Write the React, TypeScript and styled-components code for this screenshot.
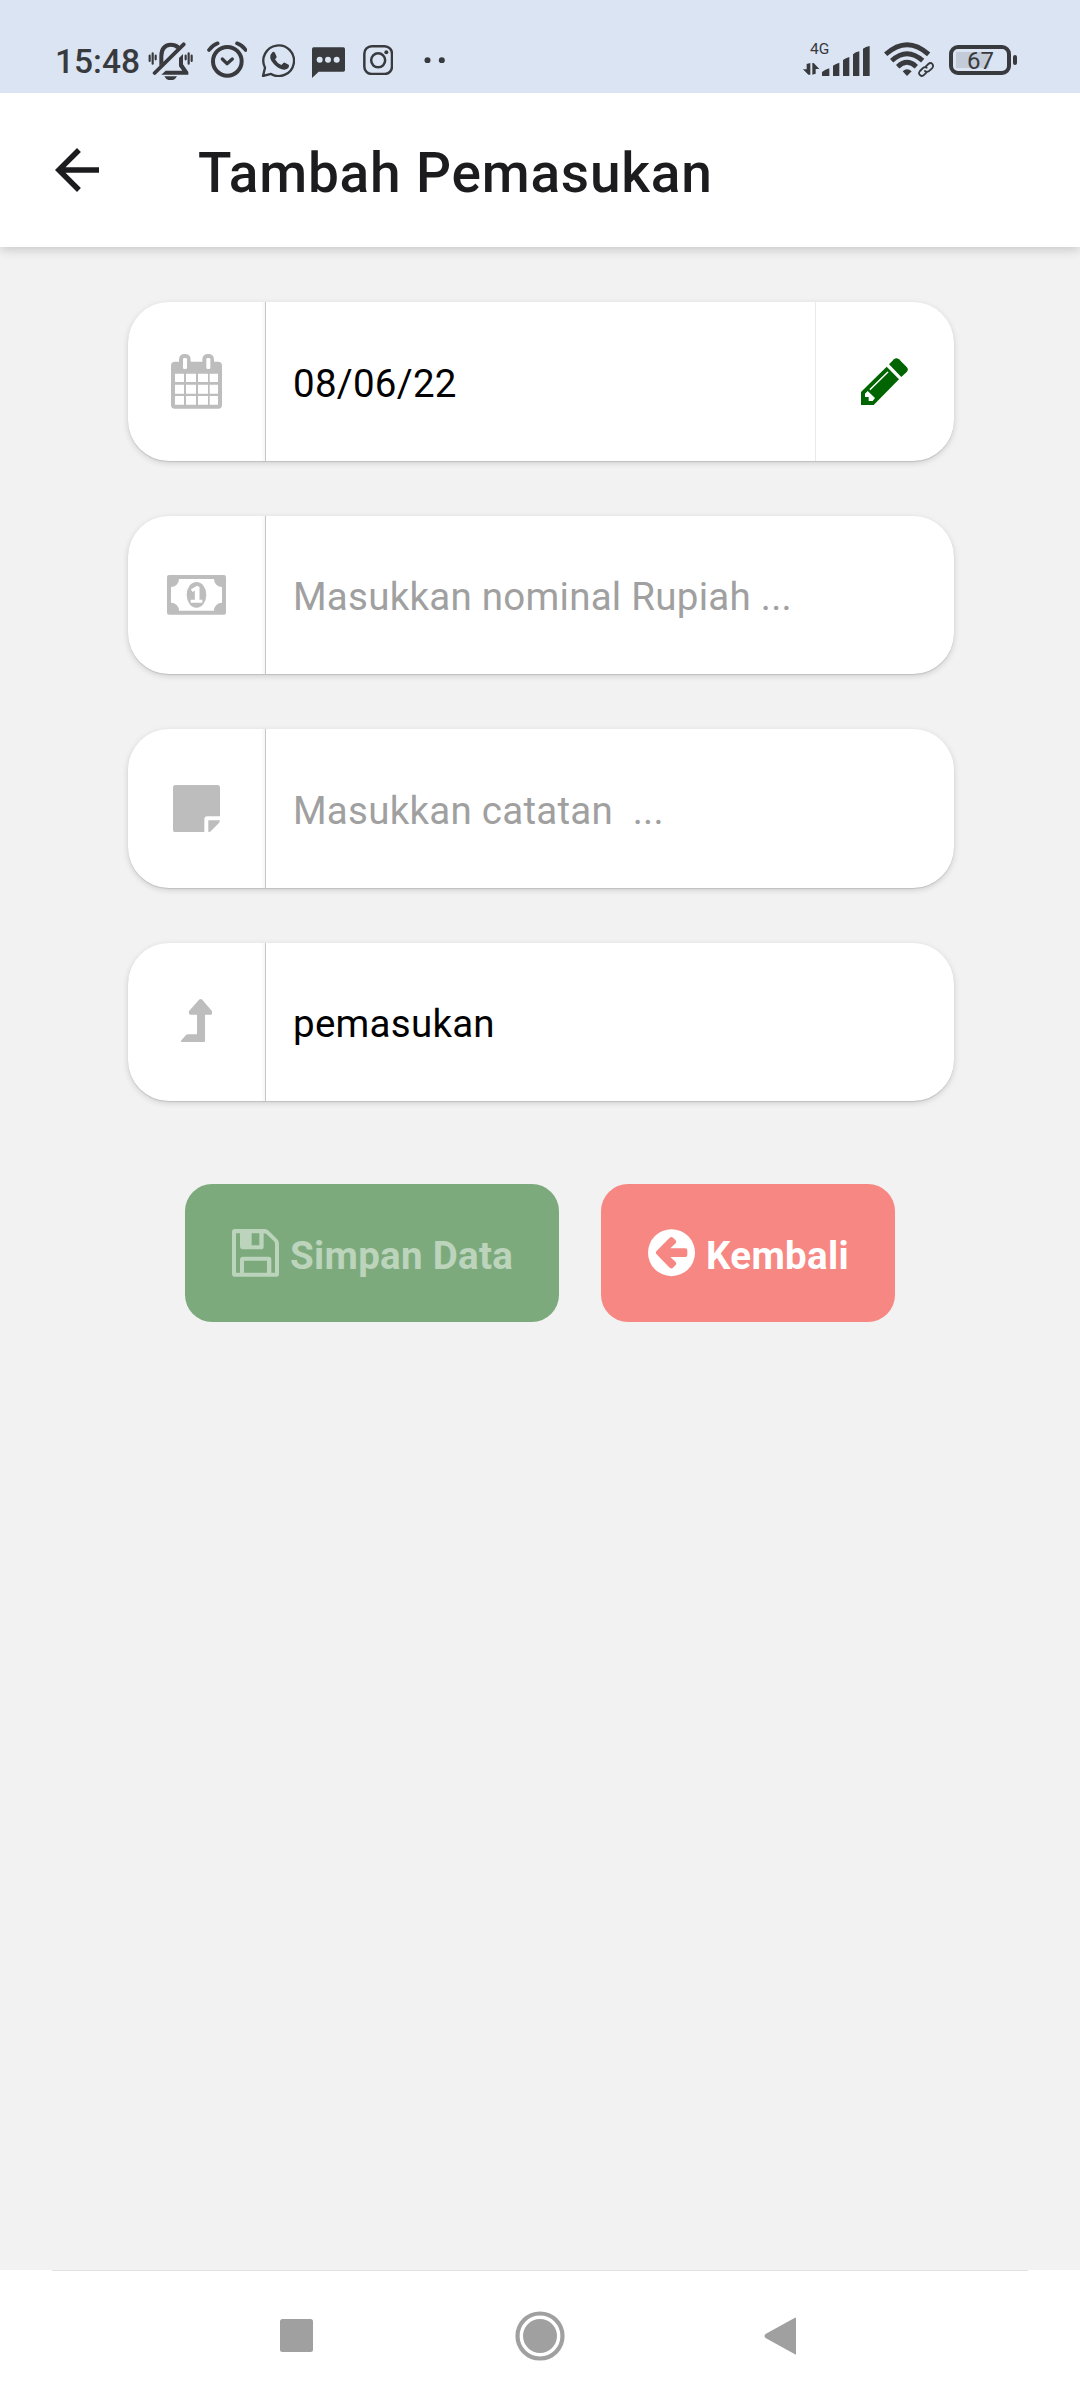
import React from "react";
import styled, { createGlobalStyle } from "styled-components";

const GlobalStyle = createGlobalStyle`
  body { margin: 0; background: #f2f2f2; }
  svg { display: block; flex: none; }
`;

const Screen = styled.div`
  width: 1080px;
  height: 2400px;
  display: flex;
  flex-direction: column;
  background: #f2f2f2;
  font-family: Roboto, "Noto Sans", sans-serif;
  overflow: hidden;
`;

const StatusBar = styled.div`
  height: 93px;
  flex: none;
  z-index: 2;
  box-sizing: border-box;
  padding: 27px 63px 0 55px;
  display: flex;
  justify-content: space-between;
  align-items: flex-start;
  background: #dbe4f3;
  color: #383a3e;
`;

const StatusGroup = styled.div`
  display: flex;
  align-items: center;
  height: 66px;
`;

const Clock = styled.span`
  font-size: 33.5px;
  font-weight: 500;
  line-height: 40px;
  width: 92.500px;
  padding-top: 4px;
  white-space: nowrap;
`;

const Slot = styled.span<{ $left?: number; $top?: number }>`
  display: flex;
  margin-left: ${(p) => p.$left ?? 0}px;
  padding-top: ${(p) => p.$top ?? 0}px;
`;

const Network = styled.div`
  display: flex;
  flex-direction: column;
  width: 17px;
  margin-right: 2px;
  margin-top: -5px;
  align-items: flex-start;
`;

const NetworkLabel = styled.span`
  font-size: 15.5px;
  line-height: 18px;
  margin: 0 0 5px 7px;
  white-space: nowrap;
`;

const BatteryShell = styled.div`
  box-sizing: border-box;
  width: 62px;
  height: 30px;
  border: 4px solid #383a3e;
  border-radius: 9px;
  padding: 5px 2px 3px 3px;
  display: flex;
  justify-content: center;
  align-items: center;
  background: linear-gradient(90deg, #c3cad8 0 33px, transparent 33px) 3px 3px / 48px 16px no-repeat;
  font-size: 24px;
  font-weight: 400;
  line-height: 22px;
`;

const BatteryTip = styled.div`
  width: 4px;
  height: 10px;
  border-radius: 2px;
  margin-left: 2px;
  background: #383a3e;
`;

const Header = styled.header`
  height: 154px;
  flex: none;
  display: flex;
  align-items: center;
  background: #fff;
  padding-left: 44px;
  box-sizing: border-box;
  box-shadow: 0 2px 11px rgba(0, 0, 0, 0.2);
  z-index: 1;
`;

const Title = styled.h1`
  margin: 6px 0 0 88px;
  font-size: 55px;
  font-weight: 500;
  line-height: 66px;
  color: #1c1c1e;
  letter-spacing: 0.8px;
  white-space: nowrap;
`;

const Content = styled.main`
  flex: 1;
  display: flex;
  flex-direction: column;
  align-items: center;
  padding-top: 55px;
`;

const Form = styled.div`
  display: grid;
  grid-template-columns: 826px;
  grid-template-rows: 159px 158px 159px 158px;
  row-gap: 55px;
  margin-left: 2px;
`;

const Field = styled.div`
  display: flex;
  align-items: stretch;
  background: #fff;
  border-radius: 41px;
  box-shadow: 0 2px 6px rgba(0, 0, 0, 0.15), 0 1px 1px rgba(0, 0, 0, 0.12);
`;

const FieldIcon = styled.div<{ $raise?: number }>`
  width: 138px;
  box-sizing: border-box;
  display: flex;
  align-items: center;
  justify-content: center;
  padding-bottom: ${(p) => p.$raise ?? 0}px;
  border-right: 1px solid #c6c6c6;
  border-radius: 41px 0 0 41px;
  background: linear-gradient(90deg, rgba(255, 255, 255, 0) 133px, #f6f6f6 137px);
`;

const FieldText = styled.div<{ $muted?: boolean }>`
  flex: 1;
  display: flex;
  align-items: center;
  padding: 4px 0 0 27px;
  font-size: 38.5px;
  line-height: 46px;
  letter-spacing: 0.26px;
  white-space: pre;
  color: ${(p) => (p.$muted ? "#a0a0a0" : "#000")};
`;

const EditButton = styled.div`
  width: 139px;
  box-sizing: border-box;
  display: flex;
  align-items: center;
  justify-content: center;
  padding-right: 2px;
  border-left: 1px solid #e9e9e9;
`;

const Actions = styled.div`
  display: flex;
  gap: 42px;
  margin-top: 83px;
`;

const Button = styled.div<{ $bg: string; $fg: string; $width: number }>`
  width: ${(p) => p.$width}px;
  height: 138px;
  box-sizing: border-box;
  padding-left: 47px;
  display: flex;
  align-items: center;
  gap: 11px;
  border-radius: 27px;
  background: ${(p) => p.$bg};
  color: ${(p) => p.$fg};
`;

const ButtonLabel = styled.span`
  font-size: 38.5px;
  font-weight: 700;
  line-height: 46px;
  letter-spacing: 0.3px;
  padding-top: 5px;
  white-space: nowrap;
`;

const NavBar = styled.nav`
  height: 130px;
  flex: none;
  box-sizing: border-box;
  background: #fff;
  display: flex;
  flex-direction: column;
`;

const NavLine = styled.div`
  height: 1px;
  margin: 0 52px;
  background: #e2e2e2;
`;

const NavIcons = styled.div`
  display: flex;
  align-items: center;
  height: 129px;
  padding-left: 279.500px;
`;

type IconProps = { box: [number, number, number, number]; color?: string; children: React.ReactNode };

/* Icons are drawn on a grid of three units per pixel. */
const Icon = ({ box, color = "#383a3e", children }: IconProps) => (
  <svg viewBox={box.join(" ")} width={box[2] / 3} height={box[3] / 3} fill={color} stroke="none">
    {children}
  </svg>
);

const rect = (x1: number, y1: number, x2: number, y2: number) => `M${x1} ${y1}H${x2}V${y2}H${x1}Z`;

const cols = [[195, 222], [228, 258], [264, 294], [299, 324]];
const rows = [[281, 306], [314, 341], [348, 374]];

const CalendarIcon = () => (
  <Icon box={[183, 222, 153, 164]} color="#bdbdbd">
    <path d="M195 245H207V239Q207 222 224.500 222Q242 222 242 239V245H277V239Q277 222 294.500 222Q312 222 312 239V245H324Q336 245 336 257V375Q336 386 325 386H194Q183 386 183 375V257Q183 245 195 245Z" />
    <g fill="#fff">
      <rect x="219" y="234" width="12" height="33" rx="4" />
      <rect x="289" y="234" width="12" height="33" rx="4" />
      <path d={rows.flatMap(([t, b]) => cols.map(([l, r]) => rect(l, t, r, b))).join("")} />
    </g>
  </Icon>
);

const MoneyIcon = () => (
  <Icon box={[171, 226, 177, 119]} color="#bdbdbd">
    <path
      fillRule="evenodd"
      d="M177 226H342Q348 226 348 232V339Q348 345 342 345H177Q171 345 171 339V232Q171 226 177 226ZM207 238A24 24 0 0 1 183 262V309A24 24 0 0 1 207 333H312A24 24 0 0 1 336 309V262A24 24 0 0 1 312 238Z"
    />
    <ellipse cx="259.500" cy="285.500" rx="29.500" ry="38.500" />
    <path d="M245 273L259 265V302M242 304.500H277" fill="none" stroke="#fff" strokeWidth="9" />
    <path d="M263 261V302" stroke="#fff" strokeWidth="11" />
  </Icon>
);

const NoteIcon = () => (
  <Icon box={[189, 224, 141, 142]} color="#bdbdbd">
    <path d="M197 224H322Q330 224 330 232V318H292Q283 318 283 327V366H197Q189 366 189 358V232Q189 224 197 224Z" />
    <path d="M295 330H330Q329 336 324 341L306 359Q301 365 295 366Z" />
  </Icon>
);

const LevelUpIcon = () => (
  <Icon box={[213, 236, 94, 130]} color="#bdbdbd">
    <path d="M267 238Q272 234 277 238L305 271Q309 277 304 283H285V362Q285 366 281 366H216Q211 364 214 360L228 344Q230 342 233 342H261V283H240Q234 278 238 271Z" />
  </Icon>
);

const PencilIcon = () => (
  <Icon box={[243, 234, 141, 141]} color="#006400">
    <path d="M243 336L320 260L357 298L281 375H243Z" />
    <path d="M327 253L342 238Q349 231 357 238L380 261Q387 268 380 276L364 291Z" />
    <path d="M271 328L323 277" stroke="#fff" strokeWidth="4.500" strokeLinecap="round" />
    <path d="M263 333L285 354L278 363H266V351H255V341Z" fill="#fff" />
  </Icon>
);

const SaveIcon = () => (
  <Icon box={[186, 208, 141, 143]} color="#bbd4bb">
    <path
      fillRule="evenodd"
      d="M194 208H284Q290 208 296 213L321 238Q327 244 327 251V343Q327 351 319 351H194Q186 351 186 343V216Q186 208 194 208ZM198 221V339H210V300Q210 291 219 291H295Q304 291 304 300V339H315V253Q315 248 312 245L290 224Q286 221 281 221V261Q281 269 272 269H219Q210 269 210 260V221ZM222 303V339H291V303ZM245 221V257H268V221Z"
    />
  </Icon>
);

const BackCircleIcon = () => (
  <Icon box={[204, 209, 141, 142]} color="#fff">
    <circle cx="274.500" cy="280" r="70.500" />
    <path
      fill="#f78783"
      d="M229 276L269 235Q274 231 279 235L287 243Q291 248 287 252L271 267H316Q322 267 322 273V287Q322 293 316 293H271L287 308Q291 313 287 317L279 325Q274 330 269 325L229 284Q226 280 229 276Z"
    />
  </Icon>
);

const MutedBellIcon = () => (
  <Icon box={[322, 64, 136, 116]}>
    <g fill="none" stroke="#383a3e" strokeWidth="6.500" strokeLinecap="round">
      <path d="M327 105V121M336 98V129M345 105V116M453 105V121M444 98V129M435 105V116" />
    </g>
    <path d="M356 136V106Q356 68 390 66Q407 66 417 76L408 85Q401 78 390 78Q368 80 368 107V125Z" />
    <path d="M415 112L427 100V131L443 154V162H362L375 150H425L415 137Z" />
    <path d="M371 167H409Q403 179 390 179Q377 179 371 167Z" />
    <path d="M342 157L429 71" stroke="#383a3e" strokeWidth="11.500" strokeLinecap="round" />
  </Icon>
);

const AlarmIcon = () => (
  <Icon box={[499, 63, 121, 112]}>
    <g fill="none" stroke="#383a3e">
      <circle cx="560" cy="124" r="43" strokeWidth="12" />
      <path d="M505 90Q515 76 531 70M615 90Q605 76 589 70" strokeWidth="11" strokeLinecap="round" />
      <path d="M545 117L559 131L575 117" strokeWidth="10" strokeLinecap="round" strokeLinejoin="round" />
    </g>
  </Icon>
);

const WhatsappIcon = () => (
  <Icon box={[663, 68, 102, 104]}>
    <path
      fill="none"
      stroke="#383a3e"
      strokeWidth="7"
      strokeLinejoin="round"
      d="M669 167L675 142A46 46 0 1 1 693 161Z"
    />
    <path d="M697 96Q702 92 705 98L710 109Q710 112 705 117Q711 129 724 134L731 127Q733 126 736 128L747 134Q748 146 734 148Q719 149 702 132Q682 111 697 96Z" />
  </Icon>
);

const MessageIcon = () => (
  <Icon box={[815, 81, 99, 93]}>
    <path d="M820 82H909Q914 82 914 87V150Q914 155 909 155H835L815 174V87Q815 82 820 82Z" />
    <g fill="#dbe4f3">
      <circle cx="838" cy="119" r="9" />
      <circle cx="863" cy="119" r="9" />
      <circle cx="889" cy="119" r="9" />
    </g>
  </Icon>
);

const InstagramIcon = () => (
  <Icon box={[968, 74, 91, 91]}>
    <g fill="none" stroke="#383a3e" strokeWidth="7.500">
      <rect x="972" y="78" width="83" height="83" rx="22" />
      <circle cx="1013.500" cy="120" r="21" />
    </g>
    <circle cx="1038" cy="96" r="6" />
  </Icon>
);

const MoreDots = () => (
  <Icon box={[1153, 110, 64, 20]}>
    <circle cx="1163.500" cy="120" r="9" />
    <circle cx="1206.500" cy="120" r="9" />
  </Icon>
);

const DataArrowsIcon = () => (
  <Icon box={[69, 131, 51, 36]}>
    <path d="M80 134L91 131V166H85L69 150H80Z" />
    <path d="M97 131H101L118 149H107V163L97 166Z" />
  </Icon>
);

const SignalIcon = () => (
  <Icon box={[127, 76, 144, 92]}>
    <path d="M127 154Q137 147 149 143V168H131Q127 168 127 164ZM160 135Q169 129 179 126V168H164Q160 168 160 164ZM190 118Q198 112 209 109V168H194Q190 168 190 164ZM220 101Q228 94 239 92V168H224Q220 168 220 164ZM250 84Q258 78 270 76V168H254Q250 168 250 164Z" />
  </Icon>
);

const WifiIcon = () => (
  <Icon box={[311, 69, 150, 106]}>
    <g fill="none" stroke="#383a3e" strokeWidth="14.500">
      <path d="M316 106Q380 48 445 106" />
      <path d="M334 125Q380 83 427 125" />
      <path d="M352 143Q380 117 408 143" />
    </g>
    <path d="M367 157Q380 145 394 157L380 171Z" />
    <g fill="none" stroke="#383a3e" strokeWidth="5.500" strokeLinecap="round">
      <path d="M436 143L444 135Q451 129 456 135Q461 141 455 148L445 157Q439 161 434 156" />
      <path d="M439 146Q434 142 428 147L419 156Q413 163 419 168Q425 174 432 167L438 161" />
    </g>
  </Icon>
);

const BackArrow = () => (
  <svg viewBox="0 0 24 24" width="66" height="66" fill="#1c1c1e">
    <path d="M20 11H7.830l5.590-5.590L12 4l-8 8 8 8 1.410-1.410L7.830 13H20z" />
  </svg>
);

export default function App() {
  return (
    <Screen>
      <GlobalStyle />
      <StatusBar>
        <StatusGroup>
          <Clock>15:48</Clock>
          <Slot $top={2}><MutedBellIcon /></Slot>
          <Slot $left={13.7}><AlarmIcon /></Slot>
          <Slot $left={14.3}><WhatsappIcon /></Slot>
          <Slot $left={16.7} $top={5}><MessageIcon /></Slot>
          <Slot $left={18}><InstagramIcon /></Slot>
          <Slot $left={31.3}><MoreDots /></Slot>
        </StatusGroup>
        <StatusGroup>
          <Network>
            <NetworkLabel>4G</NetworkLabel>
            <DataArrowsIcon />
          </Network>
          <Slot $top={2}><SignalIcon /></Slot>
          <Slot $left={14}><WifiIcon /></Slot>
          <Slot $left={15}><BatteryShell>67</BatteryShell></Slot>
          <BatteryTip />
        </StatusGroup>
      </StatusBar>
      <Header>
        <BackArrow />
        <Title>Tambah Pemasukan</Title>
      </Header>
      <Content>
        <Form>
          <Field>
            <FieldIcon><CalendarIcon /></FieldIcon>
            <FieldText>08/06/22</FieldText>
            <EditButton><PencilIcon /></EditButton>
          </Field>
          <Field>
            <FieldIcon><MoneyIcon /></FieldIcon>
            <FieldText $muted>Masukkan nominal Rupiah ...</FieldText>
          </Field>
          <Field>
            <FieldIcon><NoteIcon /></FieldIcon>
            <FieldText $muted>{"Masukkan catatan  ..."}</FieldText>
          </Field>
          <Field>
            <FieldIcon $raise={3}><LevelUpIcon /></FieldIcon>
            <FieldText>pemasukan</FieldText>
          </Field>
        </Form>
        <Actions>
          <Button $bg="#7daa7d" $fg="#bbd4bb" $width={374}>
            <SaveIcon />
            <ButtonLabel>Simpan Data</ButtonLabel>
          </Button>
          <Button $bg="#f78783" $fg="#ffffff" $width={294}>
            <BackCircleIcon />
            <ButtonLabel>Kembali</ButtonLabel>
          </Button>
        </Actions>
      </Content>
      <NavBar>
        <NavLine />
        <NavIcons>
          <svg viewBox="0 0 33 33" width="33" height="33">
            <rect width="33" height="33" rx="2.500" fill="#a0a0a0" />
          </svg>
          <Slot $left={202.5}>
            <svg viewBox="0 0 50 50" width="50" height="50">
              <circle cx="25" cy="25" r="22.500" fill="none" stroke="#a0a0a0" strokeWidth="4.200" />
              <circle cx="25" cy="25" r="17" fill="#a0a0a0" />
            </svg>
          </Slot>
          <Slot $left={199}>
            <svg viewBox="0 0 33 38" width="33" height="38">
              <path d="M32 1V37Q32 38 30.500 37L1.500 21Q-0.500 19 1.500 17L30.500 1Q32 0 32 1Z" fill="#a0a0a0" />
            </svg>
          </Slot>
        </NavIcons>
      </NavBar>
    </Screen>
  );
}
